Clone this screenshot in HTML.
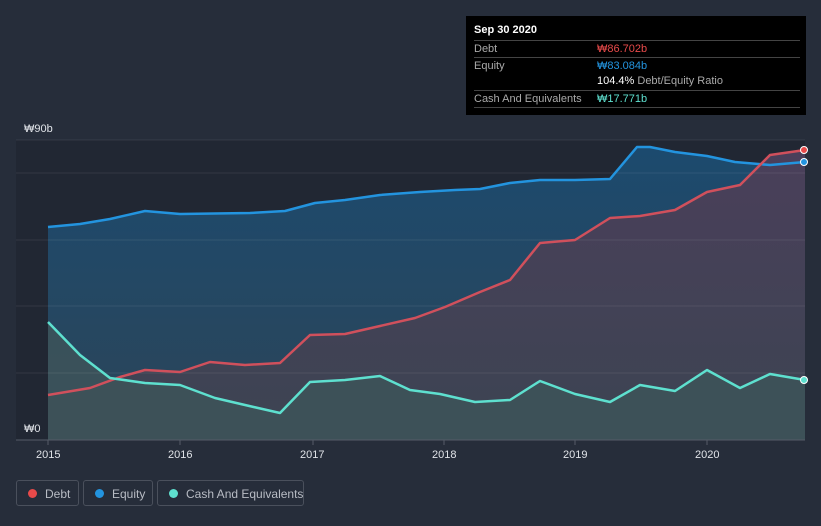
<!DOCTYPE html>
<html><head><meta charset="utf-8"><style>
html,body{margin:0;background:#262d3a;width:821px;height:526px;overflow:hidden;font-family:"Liberation Sans",sans-serif;position:relative}
.tip{position:absolute;left:466px;top:16px;width:340px;height:99px;background:#000;color:#aaa;font-size:11px}
.tip .r{position:absolute;left:8px;width:326px;border-top:1px solid #444;height:16px;line-height:16px}
.leg{position:absolute;top:480px;height:26px;border:1px solid #4a505c;border-radius:3px;color:#b8bcc4;font-size:12px;line-height:26px;box-sizing:border-box;white-space:nowrap}
.leg i{position:absolute;left:11px;top:8px;width:9px;height:9px;border-radius:50%}
.leg span{position:absolute;left:28px}
</style></head><body>
<svg width="821" height="526" style="position:absolute;left:0;top:0">
<defs>
<linearGradient id="ge" x1="0" y1="0" x2="0" y2="1"><stop offset="0" stop-color="#1c4a6e"/><stop offset="1" stop-color="#2c4558"/></linearGradient>
<linearGradient id="gd" x1="0" y1="0" x2="0" y2="1"><stop offset="0" stop-color="#4a3f5a"/><stop offset="1" stop-color="#3c4452"/></linearGradient>
</defs>
<rect x="16" y="140" width="789" height="300" fill="#212733"/>
<path d="M48,227 L80,224 110,219 145,211 180,214 250,213 285,211 315,203 345,200 380,195 420,192 455,190 480,189 510,183 540,180 575,180 610,179 637,147 650,147 675,152 707,156 735,162 770,165 805,162 L805,440 L48,440Z" fill="url(#ge)"/>
<path d="M48,395 L90,388 120,377 145,370 180,372 210,362 245,365 280,363 310,335 345,334 380,326 415,318 445,307 480,292 510,280 540,243 575,240 610,218 640,216 675,210 707,192 740,185 770,155 805,150 L805,440 L48,440Z" fill="url(#gd)"/>
<path d="M48,322 L80,355 110,378 145,383 180,385 215,398 245,405 280,413 310,382 345,380 380,376 410,390 440,394 475,402 510,400 540,381 575,394 610,402 640,385 675,391 707,370 740,388 770,374 805,380 L805,440 L48,440Z" fill="#3d5459" opacity="0.85"/>
<g stroke="#ffffff" stroke-opacity="0.08"><line x1="16" y1="140" x2="805" y2="140"/><line x1="16" y1="173" x2="805" y2="173"/><line x1="16" y1="240" x2="805" y2="240"/><line x1="16" y1="306" x2="805" y2="306"/><line x1="16" y1="373" x2="805" y2="373"/></g>
<line x1="16" y1="440" x2="805" y2="440" stroke="#555c68"/>
<g stroke="#555c68"><line x1="48" y1="440" x2="48" y2="445"/><line x1="180" y1="440" x2="180" y2="445"/><line x1="313" y1="440" x2="313" y2="445"/><line x1="444" y1="440" x2="444" y2="445"/><line x1="575" y1="440" x2="575" y2="445"/><line x1="707" y1="440" x2="707" y2="445"/></g>
<g fill="none" stroke-width="2.5" stroke-linejoin="round">
<path d="M48,227 L80,224 110,219 145,211 180,214 250,213 285,211 315,203 345,200 380,195 420,192 455,190 480,189 510,183 540,180 575,180 610,179 637,147 650,147 675,152 707,156 735,162 770,165 805,162" stroke="#2394df"/>
<path d="M48,395 L90,388 120,377 145,370 180,372 210,362 245,365 280,363 310,335 345,334 380,326 415,318 445,307 480,292 510,280 540,243 575,240 610,218 640,216 675,210 707,192 740,185 770,155 805,150" stroke="#d0505c"/>
<path d="M48,322 L80,355 110,378 145,383 180,385 215,398 245,405 280,413 310,382 345,380 380,376 410,390 440,394 475,402 510,400 540,381 575,394 610,402 640,385 675,391 707,370 740,388 770,374 805,380" stroke="#5ee0cf"/>
</g>
<circle cx="804" cy="150" r="3.5" fill="#e84a4a" stroke="#fff"/>
<circle cx="804" cy="162" r="3.5" fill="#2394df" stroke="#fff"/>
<circle cx="804" cy="380" r="3.5" fill="#5ee0cf" stroke="#fff"/>
<g fill="#e0e3e8" font-size="11" font-family="Liberation Sans,sans-serif">
<text x="24" y="132">₩90b</text><text x="24" y="432">₩0</text>
<text x="36" y="458">2015</text><text x="168" y="458">2016</text><text x="300" y="458">2017</text><text x="432" y="458">2018</text><text x="563" y="458">2019</text><text x="695" y="458">2020</text>
</g>
</svg>
<div class="tip">
<div style="position:absolute;left:8px;top:8px;color:#fff;font-weight:bold">Sep 30 2020</div>
<div class="r" style="top:24px">Debt<span style="position:absolute;left:123px;color:#e84a4a">₩86.702b</span></div>
<div class="r" style="top:41px">Equity<span style="position:absolute;left:123px;color:#2394df">₩83.084b</span></div>
<div class="r" style="top:57px;border:0"><span style="position:absolute;left:123px"><b style="color:#fff;font-weight:normal">104.4%</b> Debt/Equity Ratio</span></div>
<div class="r" style="top:74px;border-bottom:1px solid #444">Cash And Equivalents<span style="position:absolute;left:123px;color:#5ee0cf">₩17.771b</span></div>
</div>
<div class="leg" style="left:16px;width:63px"><i style="background:#e84a4a"></i><span>Debt</span></div>
<div class="leg" style="left:83px;width:70px"><i style="background:#2394df"></i><span>Equity</span></div>
<div class="leg" style="left:157px;width:147px"><i style="background:#5ee0cf"></i><span>Cash And Equivalents</span></div>
</body></html>
